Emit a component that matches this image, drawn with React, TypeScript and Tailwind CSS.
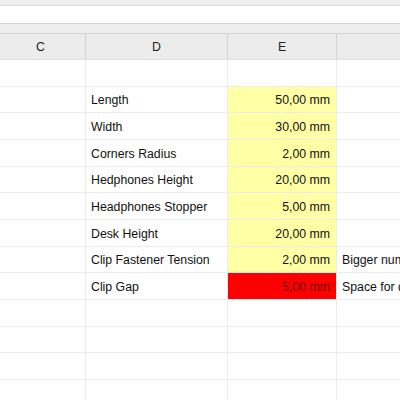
const cols = ['w-[86px]', 'w-[142px]', 'w-[109px]', 'flex-1'];

type Row = { label?: string; value?: string; note?: string; tone?: 'yellow' | 'red' };

const rows: Row[] = [
  {},
  { label: 'Length', value: '50,00 mm', tone: 'yellow' },
  { label: 'Width', value: '30,00 mm', tone: 'yellow' },
  { label: 'Corners Radius', value: '2,00 mm', tone: 'yellow' },
  { label: 'Hedphones Height', value: '20,00 mm', tone: 'yellow' },
  { label: 'Headphones Stopper', value: '5,00 mm', tone: 'yellow' },
  { label: 'Desk Height', value: '20,00 mm', tone: 'yellow' },
  { label: 'Clip Fastener Tension', value: '2,00 mm', note: 'Bigger number means tighter clip', tone: 'yellow' },
  { label: 'Clip Gap', value: '5,00 mm', note: 'Space for desk edge', tone: 'red' },
  {},
  {},
  {},
  {},
];

export default function App() {
  return (
    <div className="w-[400px] h-[400px] overflow-hidden bg-white text-[12.3px] text-[#111]"
      style={{ fontFamily: '"Liberation Sans", Arial, sans-serif' }}>
      <div className="h-[6px] bg-[#efefef] border-b border-[#dcdcdc]" />
      <div className="h-[17px] bg-white" />
      <div className="h-[11px] bg-[#ededed] border-y border-[#d2d2d2]" />

      {/* column header */}
      <div className="flex h-[26px] bg-[#ececec] border-b border-[#e0e0e0]">
        {['C', 'D', 'E', ''].map((c, i) => (
          <div key={i}
            className={`${cols[i]} shrink-0 flex items-center justify-center font-medium text-[#222] pt-[2px] ${i < 3 ? 'border-r border-[#d4d4d4]' : ''} ${i === 0 ? 'pr-[4px]' : ''}`}>
            {c}
          </div>
        ))}
      </div>

      {rows.map((r, i) => (
        <div key={i} className="flex h-[26.67px] border-b border-[#ececec]">
          <div className={`${cols[0]} shrink-0 border-r border-[#ececec]`} />
          <div className={`${cols[1]} shrink-0 border-r border-[#ececec] flex items-center pl-[5px] pt-[2px] whitespace-nowrap overflow-hidden`}>
            {r.label}
          </div>
          <div className={`${cols[2]} shrink-0 border-r border-[#ececec] flex items-center justify-end pr-[6px] pt-[2px] ${r.tone === 'yellow' ? 'bg-[#ffffa6]' : ''} ${r.tone === 'red' ? 'bg-[#ff0000] text-[#6e0000]' : ''}`}>
            {r.value}
          </div>
          <div className="flex-1 flex items-center pl-[5px] pt-[2px] whitespace-nowrap overflow-hidden">
            {r.note}
          </div>
        </div>
      ))}
    </div>
  );
}
